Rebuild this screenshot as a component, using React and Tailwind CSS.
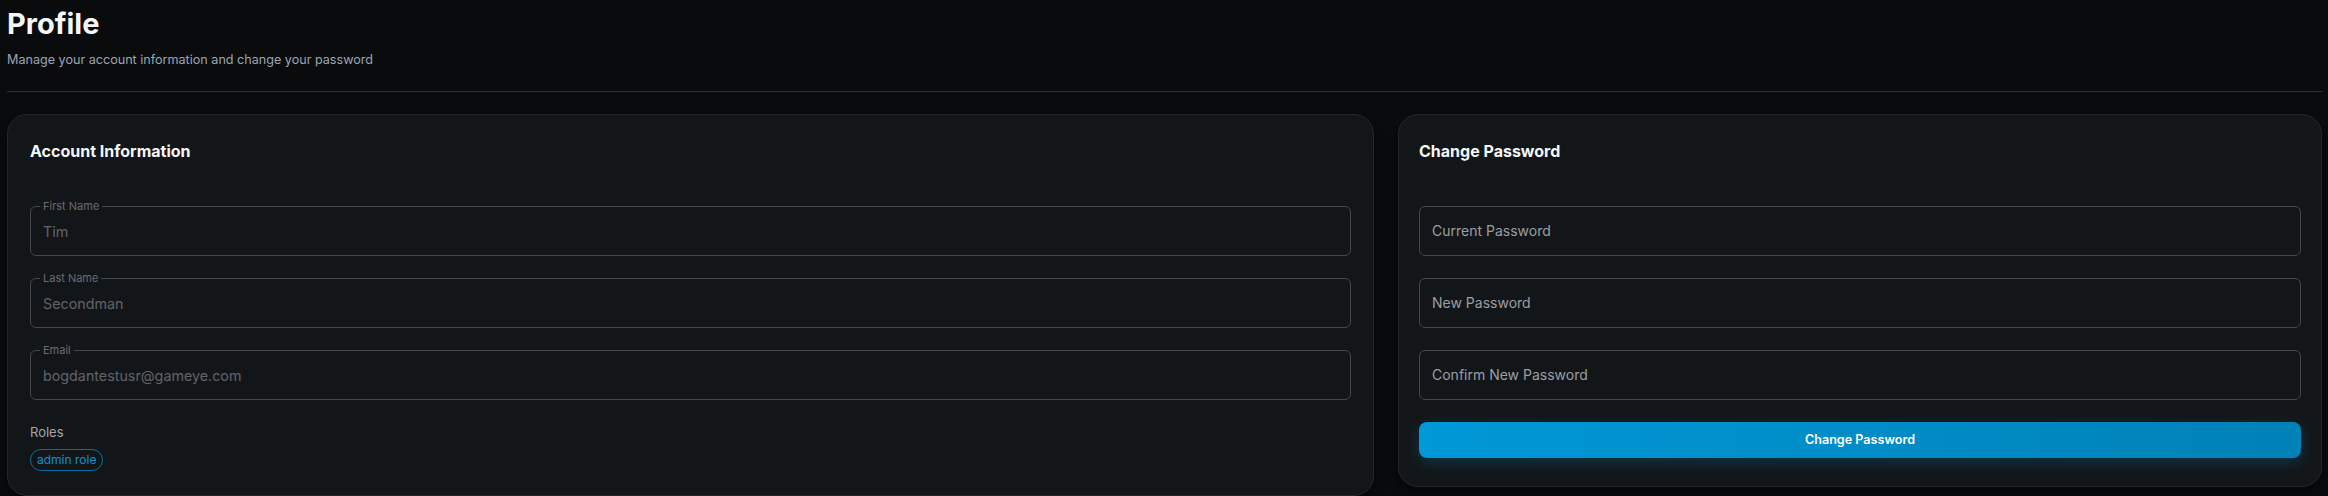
import React from "react";

const FloatingField = ({ label, value }) => {
  return (
    <div className="relative h-[50px] rounded-md border border-[#42474c]">
      <span className="absolute -top-[7px] left-[9px] bg-[#131619] px-[3px] text-[11px] leading-[13px] text-[#676c71]">
        {label}
      </span>
      <div className="flex h-full items-center px-[12px] pt-[2px] text-[14.3px] text-[#5f6469]">
        {value}
      </div>
    </div>
  );
};

const PasswordField = ({ placeholder }) => {
  return (
    <div className="flex h-[50px] items-center rounded-md border border-[#42474c] px-[12px] text-sm text-[#9a9ea3]">
      {placeholder}
    </div>
  );
};

const App = () => {
  return (
    <div className="min-h-screen bg-[#0a0b0d] pl-[7px] pr-[6px] pt-[6px] font-['Inter',sans-serif]">
      {/* Header */}
      <h1 className="text-[29px] font-bold leading-9 text-[#f5f6f7]">Profile</h1>
      <p className="mt-2 text-[12.6px] leading-5 text-[#9ba6b2]">
        Manage your account information and change your password
      </p>
      <div className="mt-[21px] h-px bg-[#2b2e32]" />

      <div className="mt-[22px] grid grid-cols-[1367fr_924fr] items-start gap-6">
        {/* Account Information */}
        <div className="rounded-[20px] border border-[#23272b] bg-[#131619] px-[22px] pb-6 pt-6 shadow-lg shadow-black/40">
          <h2 className="text-base font-bold leading-6 text-[#f5f6f7]">Account Information</h2>
          <div className="mt-[43px] flex flex-col gap-[22px]">
            <FloatingField label="First Name" value="Tim" />
            <FloatingField label="Last Name" value="Secondman" />
            <FloatingField label="Email" value="bogdantestusr@gameye.com" />
          </div>
          <p className="mt-[22px] text-[13px] leading-5 text-[#a2a6aa]">Roles</p>
          <div className="mt-[7px] flex">
            <span className="rounded-full border border-[#0a6f9e] px-[6px] text-xs leading-5 text-[#1591c9]">
              admin role
            </span>
          </div>
        </div>

        {/* Change Password */}
        <div className="rounded-[20px] border border-[#23272b] bg-[#131619] px-5 pb-7 pt-6 shadow-lg shadow-black/40">
          <h2 className="text-base font-bold leading-6 text-[#f5f6f7]">Change Password</h2>
          <div className="mt-[43px] flex flex-col gap-[22px]">
            <PasswordField placeholder="Current Password" />
            <PasswordField placeholder="New Password" />
            <PasswordField placeholder="Confirm New Password" />
            <button className="h-9 w-full rounded-lg bg-gradient-to-r from-[#0098d7] to-[#0081b7] text-[12.6px] font-semibold text-white shadow-[0_4px_14px_rgba(0,150,214,0.25)]">
              Change Password
            </button>
          </div>
        </div>
      </div>
    </div>
  );
};

export default App;
